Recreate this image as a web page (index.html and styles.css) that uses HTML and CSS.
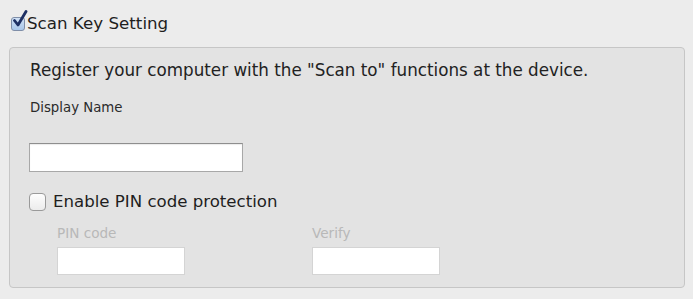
FILE: index.html
```html
<!DOCTYPE html>
<html>
<head>
<meta charset="utf-8">
<link rel="stylesheet" href="styles.css">
</head>
<body>
<div class="page">
  <div class="header">
    <span class="cb cb-checked">
      <svg width="17" height="19" viewBox="0 0 17 19"><path d="M3.5 10.5 L7 15 L15 1.5" fill="none" stroke="#1d2f63" stroke-width="2.8" stroke-linecap="round" stroke-linejoin="round"/></svg>
    </span>
    <span class="title">Scan Key Setting</span>
  </div>
  <div class="group">
    <p class="intro">Register your computer with the "Scan to" functions at the device.</p>
    <div class="field">
      <label class="label">Display Name</label>
      <div class="input wide"></div>
    </div>
    <div class="pin-row">
      <span class="cb cb-empty"></span>
      <span class="pin-title">Enable PIN code protection</span>
    </div>
    <div class="pin-fields">
      <div class="field small">
        <label class="label disabled">PIN code</label>
        <div class="input narrow"></div>
      </div>
      <div class="field small">
        <label class="label disabled">Verify</label>
        <div class="input narrow"></div>
      </div>
    </div>
  </div>
</div>
</body>
</html>
```
FILE: styles.css
```css
html, body {
  margin: 0;
  padding: 0;
  background: #ececec;
  font-family: "DejaVu Sans", sans-serif;
  color: #222;
}
.page {
  width: 693px;
  height: 299px;
  overflow: hidden;
}
.header {
  display: flex;
  align-items: center;
  padding: 13px 0 0 11px;
  height: 20px;
}
.cb {
  display: inline-block;
  box-sizing: border-box;
  position: relative;
  flex: none;
}
.cb-checked {
  width: 14px;
  height: 14px;
  border: 1px solid #7f8ea8;
  border-radius: 3px;
  background: linear-gradient(#cfe0f5, #a9c6ea);
  margin-top: 1px;
}
.cb-checked svg {
  position: absolute;
  left: -1px;
  top: -8px;
}
.title {
  font-size: 16.7px;
  line-height: 20px;
  margin-left: 2px;
  color: #1e1e1e;
}
.group {
  margin: 14px 8px 0 9px;
  height: 241px;
  box-sizing: border-box;
  background: #e3e3e3;
  border: 1px solid #c6c6c6;
  border-radius: 4px;
  padding: 12px 0 0 20px;
}
.intro {
  margin: 0;
  font-size: 16.75px;
  color: #222;
  line-height: 20px;
}
.field {
  display: flex;
  flex-direction: column;
}
.label {
  font-size: 13.3px;
  line-height: 16px;
  color: #2a2a2a;
}
.field .label {
  margin-top: 20px;
}
.label.disabled {
  color: #b8b8b8;
  font-size: 13.6px;
}
.input {
  box-sizing: border-box;
  background: #fff;
  border: 1px solid #a8a8a8;
  border-top-color: #8e8e8e;
  box-shadow: inset 0 1px 1px rgba(0,0,0,0.08);
}
.wide {
  width: 214px;
  height: 29px;
  margin-top: 27px;
  margin-left: -1px;
}
.pin-row {
  display: flex;
  align-items: center;
  height: 20px;
  margin-top: 20px;
  margin-left: -1px;
}
.cb-empty {
  width: 17px;
  height: 18px;
  border: 1px solid #9a9a9a;
  border-radius: 4px;
  background: linear-gradient(#fdfdfd, #ececec);
}
.pin-title {
  font-size: 16.6px;
  line-height: 20px;
  margin-left: 7px;
  color: #1e1e1e;
}
.pin-fields {
  display: flex;
  gap: 127px;
  padding-left: 27px;
}
.field.small .label {
  margin-top: 13px;
}
.narrow {
  width: 128px;
  height: 28px;
  margin-top: 6px;
  border-color: #d4d4d4;
  box-shadow: none;
}
```
